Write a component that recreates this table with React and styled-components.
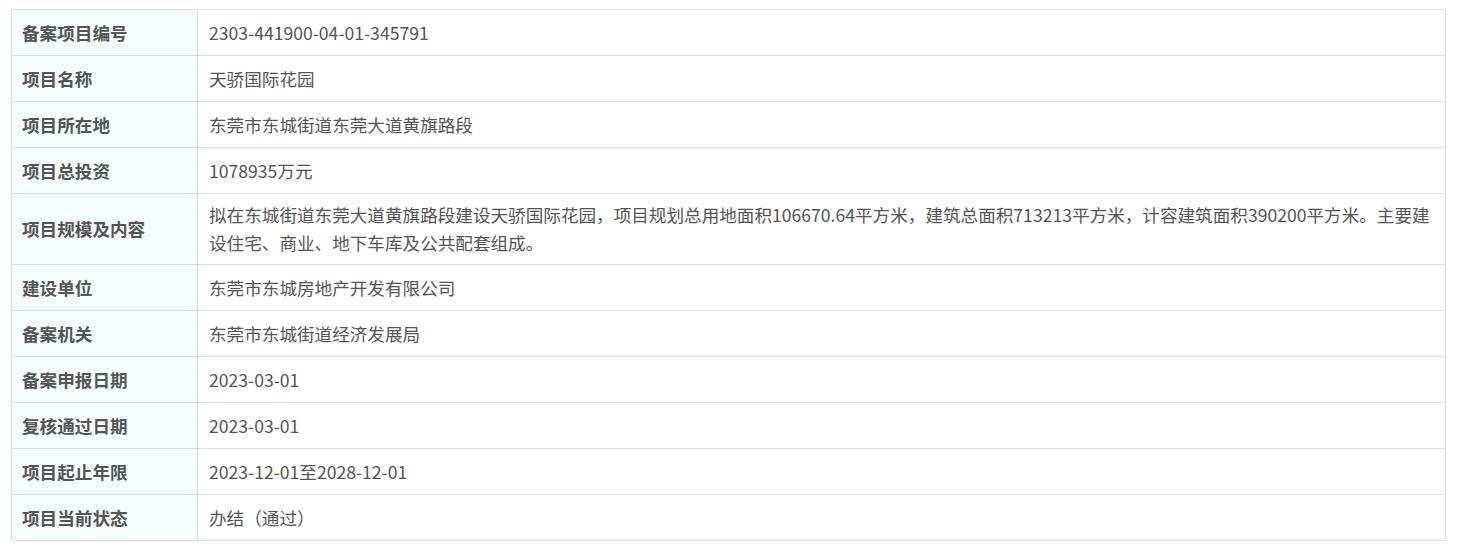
import React from "react";
import styled, { createGlobalStyle } from "styled-components";

const GlobalStyle = createGlobalStyle`
  body {
    margin: 0;
    background: #fff;
    font-family: "Microsoft YaHei", "Noto Sans CJK SC", sans-serif;
  }
`;

const Page = styled.div`
  padding: 9px 12px 0 11px;
`;

const Table = styled.table`
  width: 100%;
  border-collapse: collapse;
  border: 1px solid #dcdfe0;
  table-layout: fixed;
`;

const Row = styled.tr``;

const Label = styled.th`
  height: 46px;
  padding: 7px 10px;
  box-sizing: border-box;
  background: #f4fcfc;
  border: 1px solid #dcdfe0;
  color: #555;
  font-size: 17.6px;
  font-weight: bold;
  line-height: 28px;
  text-align: left;
  vertical-align: middle;
  white-space: nowrap;
`;

const Value = styled.td`
  height: 46px;
  padding: 7px 10px 7px 11px;
  box-sizing: border-box;
  border: 1px solid #dcdfe0;
  color: #555;
  font-size: 17.6px;
  line-height: 28px;
  vertical-align: middle;
`;

const rows = [
  ["备案项目编号", "2303-441900-04-01-345791"],
  ["项目名称", "天骄国际花园"],
  ["项目所在地", "东莞市东城街道东莞大道黄旗路段"],
  ["项目总投资", "1078935万元"],
  [
    "项目规模及内容",
    "拟在东城街道东莞大道黄旗路段建设天骄国际花园，项目规划总用地面积106670.64平方米，建筑总面积713213平方米，计容建筑面积390200平方米。主要建设住宅、商业、地下车库及公共配套组成。",
  ],
  ["建设单位", "东莞市东城房地产开发有限公司"],
  ["备案机关", "东莞市东城街道经济发展局"],
  ["备案申报日期", "2023-03-01"],
  ["复核通过日期", "2023-03-01"],
  ["项目起止年限", "2023-12-01至2028-12-01"],
  ["项目当前状态", "办结（通过）"],
];

export default function App() {
  return (
    <Page>
      <GlobalStyle />
      <Table>
        <colgroup>
          <col style={{ width: "186px" }} />
          <col />
        </colgroup>
        <tbody>
          {rows.map(([k, v]) => (
            <Row key={k}>
              <Label>{k}</Label>
              <Value>{v}</Value>
            </Row>
          ))}
        </tbody>
      </Table>
    </Page>
  );
}
